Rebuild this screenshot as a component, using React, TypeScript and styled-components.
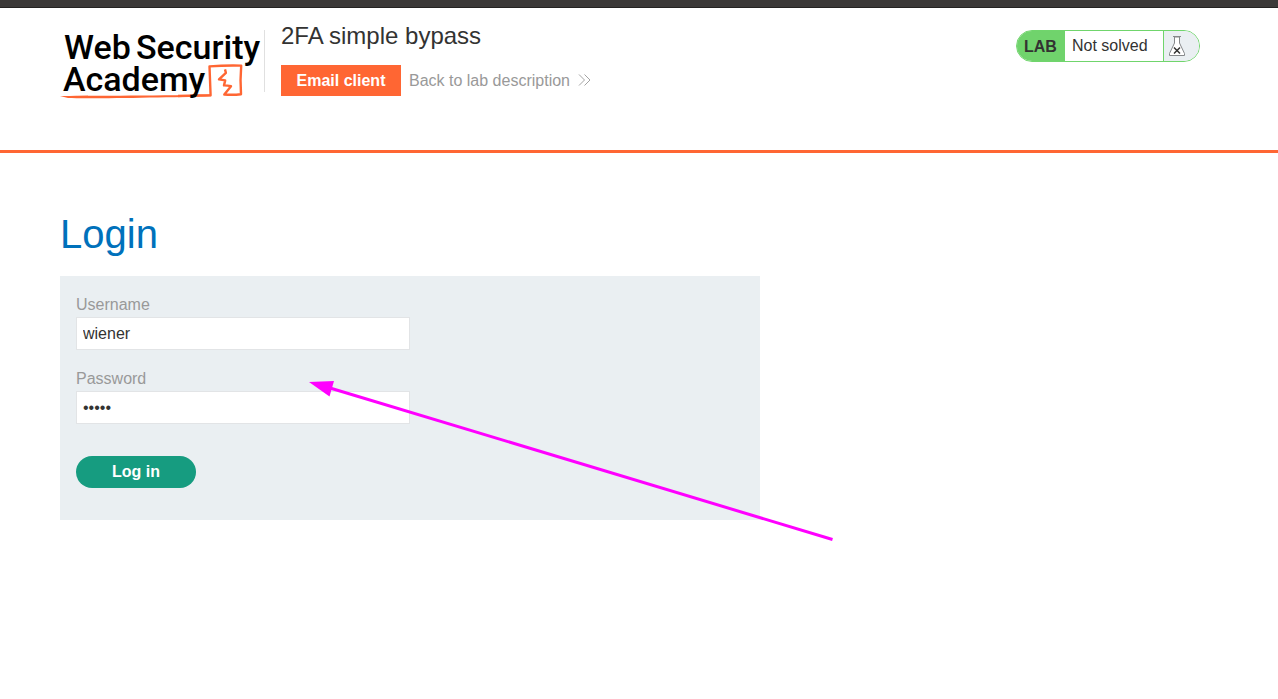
import React from "react";
import styled, { createGlobalStyle } from "styled-components";

const GlobalStyle = createGlobalStyle`
  *, *::before, *::after { box-sizing: border-box; }
  body {
    margin: 0;
    background: #fff;
    color: #333332;
    font-family: "Liberation Sans", Arial, sans-serif;
    font-size: 16px;
  }
  input, button { font: inherit; color: inherit; }
`;

const Page = styled.div`
  position: relative;
`;

const TopStrip = styled.div`
  height: 8px;
  background: #3b3938;
  border-bottom: 1px solid #242322;
`;

const Header = styled.header`
  display: flex;
  align-items: flex-start;
  min-height: 145px;
  padding: 14px 78px 0 60px;
  border-bottom: 3px solid #ff6633;
`;

const LogoLink = styled.a`
  display: block;
  flex: none;
  height: 70px;
  margin-top: 8px;
`;

const LogoText = styled.text`
  font-family: Roboto, "Liberation Sans", sans-serif;
  font-size: 34px;
  font-weight: 500;
  fill: #000;
`;

const TitleBlock = styled.div`
  position: relative;
  flex: 1;
  margin-left: 4px;
  padding-left: 17px;

  &::before {
    content: "";
    position: absolute;
    left: 0;
    top: 8px;
    bottom: 4px;
    width: 1px;
    background: #e0e0e0;
  }
`;

const Title = styled.h2`
  margin: 0 0 15px;
  font-size: 24px;
  line-height: 28px;
  font-weight: 400;
`;

const LinkRow = styled.div`
  display: flex;
  align-items: center;
  gap: 8px;
`;

const EmailButton = styled.a`
  min-width: 120px;
  background: #ff6633;
  color: #fff;
  font-weight: 700;
  line-height: 31px;
  text-align: center;
  text-decoration: none;
`;

const BackLink = styled.a`
  display: flex;
  align-items: center;
  gap: 8px;
  color: #999;
  text-decoration: none;
`;

const Status = styled.div`
  display: flex;
  width: 184px;
  height: 32px;
  margin-top: 8px;
  border: 1px solid #70d56c;
  border-radius: 16px;
  overflow: hidden;
  line-height: 30px;
`;

const StatusTag = styled.span`
  width: 48px;
  padding-left: 7px;
  background: #70d36c;
  font-weight: 700;
  line-height: 31px;
`;

const StatusText = styled.span`
  flex: 1;
  padding-left: 7px;
  white-space: nowrap;
`;

const StatusIcon = styled.span`
  display: flex;
  align-items: center;
  width: 36px;
  padding-left: 5px;
  border-left: 1px solid #70d56c;
  background: #eaeff2;
`;

const Main = styled.main`
  padding: 58px 78px 60px 60px;
`;

const Heading = styled.h1`
  margin: 0 0 19px;
  color: #0071bb;
  font-size: 40px;
  line-height: 46px;
  font-weight: 400;
`;

const LoginForm = styled.form`
  max-width: 700px;
  padding: 16px 16px 32px;
  background: #eaeff2;
`;

const Field = styled.div`
  margin-bottom: 16px;
`;

const Label = styled.label`
  display: block;
  color: #999;
  line-height: 25px;
`;

const Input = styled.input`
  display: block;
  width: 100%;
  max-width: 334px;
  height: 33px;
  padding: 0 6px;
  border: 1px solid #e2e4e6;
  border-radius: 0;
  background: #fff;
  outline: none;
`;

const SubmitButton = styled.button`
  display: block;
  width: 120px;
  height: 32px;
  margin-top: 32px;
  padding: 0;
  border: 0;
  border-radius: 16px;
  background: #169c80;
  color: #fff;
  font-weight: 700;
`;

const Pointer = styled.svg`
  position: absolute;
  left: 308px;
  top: 378px;
  pointer-events: none;
`;

function Logo() {
  return (
    <svg width="200" height="70" viewBox="0 0 200 70" overflow="visible" role="img" aria-label="Web Security Academy">
      <path d="M0 66 C20 65.4 90 66 151 64.4 L151 66.2 C110 67.4 30 68.8 8 68 Z" fill="#ff6633" />
      <path
        d="M118 66 L150.6 65.2 L149.5 36.4 Q165 35.2 181.2 35.6 Q180 50 181 64.2 Q173 65.2 164.3 64.5 L171 56.2 Q167.5 55.4 164 55.4 L165.2 50.4 L159 49.4 L165.9 42.8 L165 39.4"
        fill="none"
        stroke="#ff6633"
        strokeWidth="2.4"
        strokeLinejoin="round"
      />
      <LogoText x="4" y="29">Web</LogoText>
      <LogoText x="76" y="29">Security</LogoText>
      <LogoText x="3" y="61">Academy</LogoText>
    </svg>
  );
}

function Chevrons() {
  return (
    <svg width="13" height="14" viewBox="0 0 13 14" fill="none" stroke="#999" aria-hidden="true">
      <path d="M1 0.5 L6.5 6 L1 11.5 M6.5 0.5 L12 6 L6.5 11.5" strokeWidth="0.9" />
    </svg>
  );
}

function Flask() {
  return (
    <svg width="16" height="20" viewBox="0 0 16 20" fill="none" stroke="#85888a" aria-hidden="true">
      <path d="M5.5 1 V7 L0.5 17.5 V19.5 H15.5 V17.5 L10.5 7 V1 Z" fill="#fff" />
      <path d="M4 0.5 H12" />
      <path d="M5 11.5 L11 17.5 M11 11.5 L5 17.5" stroke="#333332" strokeWidth="1.5" />
    </svg>
  );
}

export default function App() {
  return (
    <Page>
      <GlobalStyle />
      <TopStrip />
      <Header>
        <LogoLink href="#"><Logo /></LogoLink>
        <TitleBlock>
          <Title>2FA simple bypass</Title>
          <LinkRow>
            <EmailButton href="#">Email client</EmailButton>
            <BackLink href="#">Back to lab description<Chevrons /></BackLink>
          </LinkRow>
        </TitleBlock>
        <Status>
          <StatusTag>LAB</StatusTag>
          <StatusText>Not solved</StatusText>
          <StatusIcon><Flask /></StatusIcon>
        </Status>
      </Header>
      <Main>
        <Heading>Login</Heading>
        <LoginForm onSubmit={(e) => e.preventDefault()}>
          <Field>
            <Label htmlFor="username">Username</Label>
            <Input id="username" type="text" defaultValue="wiener" />
          </Field>
          <Field>
            <Label htmlFor="password">Password</Label>
            <Input id="password" type="password" defaultValue="peter" />
          </Field>
          <SubmitButton type="submit">Log in</SubmitButton>
        </LoginForm>
      </Main>
      <Pointer width="528" height="166" viewBox="0 0 528 166" aria-hidden="true">
        <path d="M22 10 L524.5 161.5" stroke="#ff00ff" strokeWidth="3" />
        <path d="M1 4 L26 3 L21.5 18.5 Z" fill="#ff00ff" />
      </Pointer>
    </Page>
  );
}
